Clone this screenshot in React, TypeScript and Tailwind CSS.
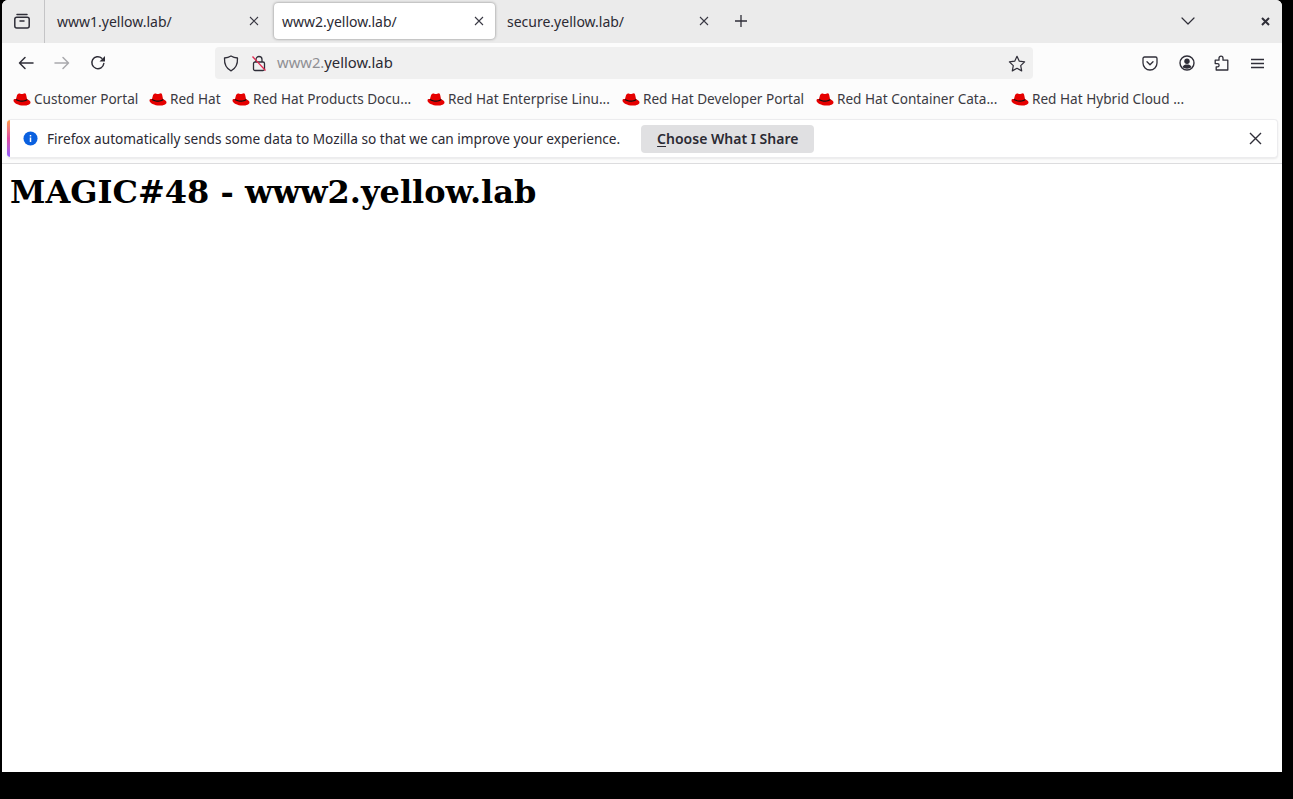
const uiFont = "font-['Noto_Sans','Open_Sans',sans-serif]";

function RedHat() {
  return (
    <svg width="18" height="15" viewBox="0 0 18 15" className="shrink-0">
      <path d="M11.800 1.300c-1 0-2.100.8-3.200.8-.9 0-1.500-.6-2.500-.6-1.200 0-1.900.9-2.300 2.400L3 7C1.400 6.800.5 7.300.5 8.400c0 2.400 4.700 5.100 10.300 5.100 3.800 0 6.700-1.200 6.700-3.100 0-1.500-1.900-2.500-3.500-3.400L13.300 3.500c-.3-1.300-.7-2.200-1.500-2.200z" fill="#e60000" />
      <path d="M3 7c2.700 1.500 7.300 2.500 11-.1l.6 1.200C11 11 5.800 9.600 2.700 8z" fill="#111" />
    </svg>
  );
}

function Tab({ title, active }: { title: string; active?: boolean }) {
  return (
    <div
      className={`flex h-9 w-[221px] shrink-0 items-center justify-between rounded pl-2 pr-[11px] ${
        active ? "bg-white shadow-[0_0_3px_rgba(0,0,0,0.45)]" : ""
      }`}
    >
      <span className="text-[14px] text-[#2b2a33]">{title}</span>
      <svg width="10" height="10" viewBox="0 0 10 10" stroke="#3a3944" strokeWidth="1.100" fill="none">
        <path d="M1 1l8 8M9 1l-8 8" />
      </svg>
    </div>
  );
}

function Bookmark({ label, width }: { label: string; width: string }) {
  return (
    <div className={`flex items-center gap-[3px] ${width}`}>
      <RedHat />
      <span className="text-[13.6px] whitespace-nowrap text-[#3b3a42]">{label}</span>
    </div>
  );
}

const icon = { fill: "none", stroke: "#2f2e38", strokeWidth: 1.500, strokeLinecap: "round", strokeLinejoin: "round" } as const;

export default function App() {
  return (
    <div className={`h-[799px] w-[1293px] overflow-hidden bg-black pr-[11px] pb-[27px] pl-[2px] ${uiFont}`}>
      <div className="flex h-full flex-col overflow-hidden rounded-t-[6px] bg-white">
        {/* tab strip */}
        <div className="flex h-[43px] shrink-0 items-center bg-[#ebebeb] pb-[1px]">
          <div className="flex h-[43px] w-[43px] items-center justify-center border-r border-[#c4c4c6]">
            <svg width="16" height="16" viewBox="0 0 16 16" {...icon} className="ml-[-3px]">
              <rect x="0.800" y="4.200" width="14.400" height="10.800" rx="2" />
              <path d="M3 1.500h10M6 8h4" />
            </svg>
          </div>
          <div className="ml-[4px] flex h-full items-center gap-[4px]">
            <Tab title="www1.yellow.lab/" />
            <Tab title="www2.yellow.lab/" active />
            <Tab title="secure.yellow.lab/" />
          </div>
          <svg width="14" height="14" viewBox="0 0 14 14" stroke="#2f2e38" strokeWidth="1.300" className="ml-[14px]">
            <path d="M7 1v12M1 7h12" />
          </svg>
          <svg width="14" height="8" viewBox="0 0 14 8" {...icon} strokeWidth={1.200} className="ml-[433px]">
            <path d="M1 1l6 6 6-6" />
          </svg>
          <svg width="9" height="9" viewBox="0 0 9 9" stroke="#2f2e38" strokeWidth="2" className="ml-[66px]">
            <path d="M1 1l7 7M8 1l-7 7" />
          </svg>
        </div>

        {/* nav bar */}
        <div className="flex h-[40px] shrink-0 items-center bg-[#fcfcfc]">
          <svg width="16" height="14" viewBox="0 0 16 14" {...icon} className="ml-4">
            <path d="M15 7H1.500M7 1.500L1.500 7 7 12.500" />
          </svg>
          <svg width="16" height="14" viewBox="0 0 16 14" {...icon} stroke="#a9a9ad" className="ml-5">
            <path d="M1 7h13.500M9 1.500L14.500 7 9 12.500" />
          </svg>
          <svg width="16" height="16" viewBox="0 0 16 16" {...icon} className="ml-[20px]">
            <path d="M13.800 8.500A6 6 0 1 1 11.800 3.200" />
            <path d="M15 1v5.500H9.500z" fill="#2f2e38" stroke="none" />
          </svg>
          <div className="ml-[109px] flex h-8 w-[818px] items-center rounded bg-[#f0f0f0]">
            <svg width="16" height="17" viewBox="0 0 16 17" {...icon} strokeWidth={1.300} className="ml-2">
              <path d="M8 1c2 1.200 4 1.800 6.500 2 .3 6-1.800 10.500-6.500 12.800C3.300 13.500 1.200 9 1.500 3 4 2.800 6 2.200 8 1z" />
            </svg>
            <svg width="16" height="17" viewBox="0 0 16 17" fill="none" strokeWidth="1.300" className="ml-3">
              <path d="M5 7V4.500a3 3 0 0 1 6 0V7" stroke="#2f2e38" />
              <rect x="2.500" y="7" width="11" height="8.500" rx="1.500" stroke="#2f2e38" />
              <path d="M1.500 1.500l13 14" stroke="#e22850" />
            </svg>
            <span className="mb-[2px] ml-[10px] text-[14.8px] text-[#8f8f94]">
              www2.<span className="text-[#2b2a33]">yellow.lab</span>
            </span>
            <svg width="18" height="17" viewBox="0 0 18 17" {...icon} strokeWidth={1.200} className="ml-auto mr-[7px]">
              <path d="M9 1.300l2.300 4.900 5.300.7-3.900 3.700 1 5.300L9 13.300l-4.700 2.600 1-5.300L1.400 6.900l5.300-.7z" />
            </svg>
          </div>
          <svg width="16" height="15" viewBox="0 0 16 15" {...icon} strokeWidth={1.300} className="ml-[109px]">
            <path d="M2.500 1h11A1.500 1.500 0 0 1 15 2.500V7a7 7 0 0 1-14 0V2.500A1.500 1.500 0 0 1 2.500 1z" />
            <path d="M5 5.800l3 3 3-3" />
          </svg>
          <svg width="16" height="16" viewBox="0 0 16 16" className="ml-[21px]">
            <circle cx="8" cy="8" r="7" fill="none" stroke="#2f2e38" strokeWidth="1.400" />
            <circle cx="8" cy="6.300" r="2.700" fill="#2f2e38" />
            <path d="M3.500 12c1-1.800 2.500-2.400 4.500-2.400s3.500.6 4.500 2.400c-1 1-2.700 1.700-4.500 1.700S4.500 13 3.500 12z" fill="#2f2e38" />
          </svg>
          <svg width="15" height="16" viewBox="0 0 15 16" {...icon} strokeWidth={1.300} className="ml-[19px]">
            <path d="M1.200 5.200H5V3.200a2 2 0 0 1 4 0v2h4.800v9.800H2.200V11.800h1.300a1.600 1.600 0 0 0 0-3.200H1.200z" />
          </svg>
          <svg width="13" height="11" viewBox="0 0 13 11" stroke="#2f2e38" strokeWidth="1.300" className="ml-[22px]">
            <path d="M0 1.500h13M0 5.500h13M0 9.500h13" />
          </svg>
        </div>

        {/* bookmarks */}
        <div className="flex h-[32px] shrink-0 items-center bg-[#fcfcfc] pt-[1px] pl-[11px]">
          <Bookmark label="Customer Portal" width="w-[136px]" />
          <Bookmark label="Red Hat" width="w-[83px]" />
          <Bookmark label="Red Hat Products Docu..." width="w-[195px]" />
          <Bookmark label="Red Hat Enterprise Linu..." width="w-[195px]" />
          <Bookmark label="Red Hat Developer Portal" width="w-[194px]" />
          <Bookmark label="Red Hat Container Cata..." width="w-[195px]" />
          <Bookmark label="Red Hat Hybrid Cloud ..." width="w-[190px]" />
        </div>

        {/* notification */}
        <div className="h-[49px] shrink-0 border-b border-[#dcdcde] bg-[#fcfcfc] pt-[4px] pr-[4px] pl-[5px]">
          <div className="flex h-[39px] items-center overflow-hidden rounded-[4px] border border-l-0 border-[#ececee] bg-white shadow-[0_1px_2px_rgba(0,0,0,0.08)]">
            <div className="h-full w-[3px] shrink-0 bg-gradient-to-b from-[#ff9a3c] via-[#e0479e] to-[#9059ff]" />
            <svg width="15" height="15" viewBox="0 0 16 16" className="ml-[13px] shrink-0">
              <circle cx="8" cy="8" r="7.500" fill="#0a60df" />
              <path d="M7.200 7h1.600v4.800H7.200zM7.200 4.200h1.600v1.600H7.200z" fill="#fff" />
            </svg>
            <span className="mt-[1px] ml-[9px] whitespace-nowrap text-[13.65px] text-[#2b2a33]">
              Firefox automatically sends some data to Mozilla so that we can improve your experience.
            </span>
            <button
              type="button"
              className="ml-[21px] flex h-7 w-[173px] items-center justify-center rounded bg-[#e0e0e2] text-[14px] font-semibold text-[#2b2a33]"
            >
              <span className="underline underline-offset-2">C</span>hoose What I Share
            </button>
            <svg width="13" height="13" viewBox="0 0 13 13" stroke="#2f2e38" strokeWidth="1.400" className="ml-auto mr-[15px]">
              <path d="M1 1l11 11M12 1L1 12" />
            </svg>
          </div>
        </div>

        {/* page */}
        <h1 className="mx-2 mt-[9px] font-['DejaVu_Serif',serif] text-[32px] leading-[38px] font-bold text-black">
          MAGIC#48 - www2.yellow.lab
        </h1>
      </div>
    </div>
  );
}
